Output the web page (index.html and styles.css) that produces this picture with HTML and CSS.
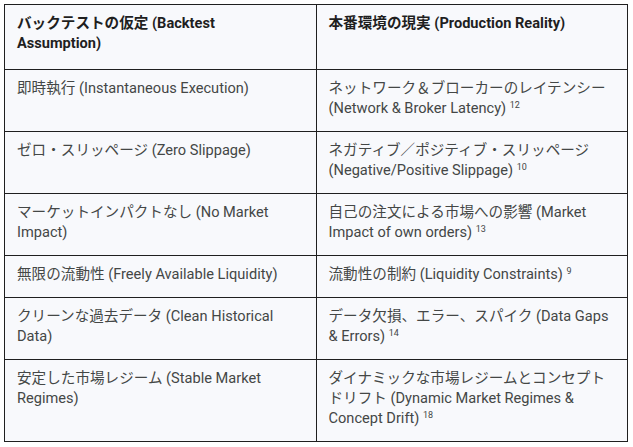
FILE: index.html
```html
<!DOCTYPE html>
<html lang="ja">
<head>
<meta charset="utf-8">
<link rel="stylesheet" href="styles.css">
</head>
<body>
<div class="wrap">
<table class="cmp">
  <thead>
    <tr>
      <th>バックテストの仮定 (Backtest Assumption)</th>
      <th>本番環境の現実 (Production Reality)</th>
    </tr>
  </thead>
  <tbody>
    <tr>
      <td>即時執行 (Instantaneous Execution)</td>
      <td>ネットワーク＆ブローカーのレイテンシー (Network &amp; Broker Latency) <sup class="ref">12</sup></td>
    </tr>
    <tr>
      <td>ゼロ・スリッページ (Zero Slippage)</td>
      <td>ネガティブ／ポジティブ・スリッページ (Negative/Positive Slippage) <sup class="ref">10</sup></td>
    </tr>
    <tr>
      <td>マーケットインパクトなし (No Market Impact)</td>
      <td>自己の注文による市場への影響 (Market Impact of own orders) <sup class="ref">13</sup></td>
    </tr>
    <tr>
      <td>無限の流動性 (Freely Available Liquidity)</td>
      <td>流動性の制約 (Liquidity Constraints) <sup class="ref">9</sup></td>
    </tr>
    <tr>
      <td>クリーンな過去データ (Clean Historical Data)</td>
      <td>データ欠損、エラー、スパイク (Data Gaps &amp; Errors) <sup class="ref">14</sup></td>
    </tr>
    <tr>
      <td>安定した市場レジーム (Stable Market Regimes)</td>
      <td>ダイナミックな市場レジームとコンセプトドリフト (Dynamic Market Regimes &amp; Concept Drift) <sup class="ref">18</sup></td>
    </tr>
  </tbody>
</table>
</div>
</body>
</html>
```
FILE: styles.css
```css
html, body {
  margin: 0;
  padding: 0;
  background: #ffffff;
}
.wrap {
  padding: 4px 5px 0 4px;
}
.cmp {
  width: 624px;
  border-collapse: collapse;
  table-layout: fixed;
  background: #f8f9fc;
  font-family: Roboto, "Noto Sans CJK JP", sans-serif;
  font-size: 14.6px;
  line-height: 20px;
  color: #444746;
}
.cmp th,
.cmp td {
  border: 1px solid #1f1f1f;
  padding: 8px 12px 13px 12px;
  text-align: left;
  vertical-align: top;
  width: 50%;
}
.cmp th {
  font-weight: 700;
  color: #1f1f1f;
  padding-right: 22px;
  padding-bottom: 16px;
}
.ref {
  font-size: 9px;
  line-height: 0;
  vertical-align: 5px;
  color: #444746;
}
```
